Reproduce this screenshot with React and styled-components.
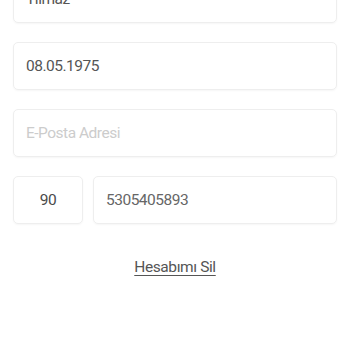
import React from 'react';
import styled, { createGlobalStyle } from 'styled-components';

const GlobalStyle = createGlobalStyle`
  html, body {
    margin: 0;
    padding: 0;
    background: #ffffff;
    font-family: Roboto, "Liberation Sans", sans-serif;
  }
`;

const Page = styled.div`
  width: 350px;
  height: 350px;
  overflow: hidden;
  background: #ffffff;
`;

const Form = styled.div`
  display: flex;
  flex-direction: column;
  gap: 19px;
  padding: 0 13px;
  margin-top: -25px;
`;

const Field = styled.div`
  box-sizing: border-box;
  height: 48px;
  flex: ${p => (p.grow ? 1 : 'none')};
  width: ${p => (p.width ? p.width + 'px' : 'auto')};
  display: flex;
  align-items: center;
  justify-content: ${p => (p.center ? 'center' : 'flex-start')};
  padding: ${p => (p.center ? '0' : '0 12px')};
  border: 1px solid #eeeeee;
  border-radius: 5px;
  box-shadow: 0 1px 2px rgba(0, 0, 0, 0.04);
  font-size: 15.5px;
  letter-spacing: -0.5px;
  color: ${p => p.tone || '#555555'};
`;

const Row = styled.div`
  display: flex;
  gap: 10px;
`;

const LinkRow = styled.div`
  display: flex;
  justify-content: center;
  padding-top: 34px;
`;

const DeleteLink = styled.a`
  font-size: 15.5px;
  letter-spacing: -0.4px;
  color: #555555;
  text-decoration: underline;
  text-underline-offset: 3px;
  cursor: pointer;
`;

export default function App() {
  return (
    <Page>
      <GlobalStyle />
      <Form>
        <Field>Yılmaz</Field>
        <Field>08.05.1975</Field>
        <Field tone="#cccccc">E-Posta Adresi</Field>
        <Row>
          <Field width={70} center tone="#4a4a4a">90</Field>
          <Field grow tone="#666666">5305405893</Field>
        </Row>
      </Form>
      <LinkRow>
        <DeleteLink>Hesabımı Sil</DeleteLink>
      </LinkRow>
    </Page>
  );
}
